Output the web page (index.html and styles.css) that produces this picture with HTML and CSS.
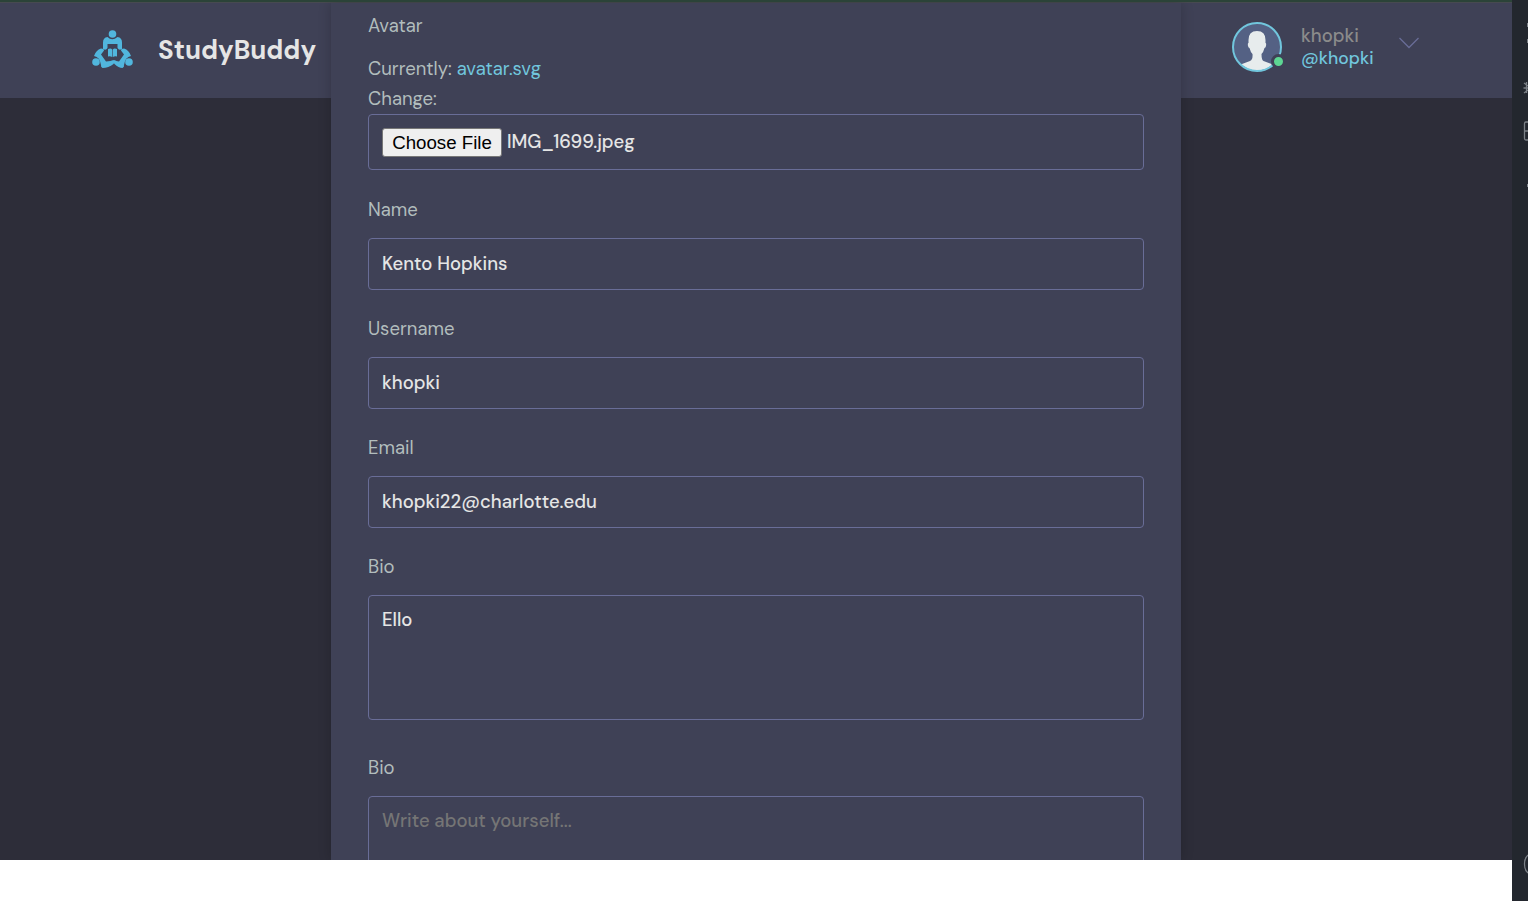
FILE: index.html
```
<!DOCTYPE html>
<html lang="en">
<head>
<meta charset="utf-8">
<title>StudyBuddy</title>
<link rel="stylesheet" href="styles.css">
</head>
<body>
<div class="window">
  <div class="page">
    <header class="header">
      <a class="brand">
        <svg class="logo" viewBox="0 0 42 42" fill="#51b6dd">
          <circle cx="20.5" cy="5" r="3.8"/>
          <path d="M11 20v-6.500q0-5 4.500-5.500 4.500 4.500 10 0 4.500.5 4.500 5.500V20q-3 2-4.500-1v-4h-10v4q-1.500 3-4.500 1z"/>
          <circle cx="4" cy="33" r="3.800"/>
          <circle cx="37" cy="33" r="3.800"/>
          <path d="M2 27q2-6 7-7.500 3 0 3 2l-3 4 5 7q5-.5 7.500-1.500 2 1 0 4-5 4-11 4-2-1-1.500-3-1-8-7-9z"/>
          <path d="M39 27q-2-6-7-7.500-3 0-3 2l3 4-5 7q-3-.5-4.500-1.500-2 1 0 4 4 4 8 4 2-1 1.500-3 1-8 7-9z"/>
          <path d="M16 20q3-1 4.200.5v7.500q-2-1-4.200-.5zM25 20q-3-1-4.200.5v7.500q2-1 4.200-.5z"/>
        </svg>
        <span class="brand-name">StudyBuddy</span>
      </a>
      <div class="user">
        <div class="avatar">
          <svg class="avatar-img" viewBox="0 0 50 50">
            <defs><clipPath id="round"><circle cx="25" cy="25" r="23.500"/></clipPath></defs>
            <circle cx="25" cy="25" r="24" fill="#546184"/>
            <path clip-path="url(#round)" fill="#e7eced" d="M16.500 18q0-9 8.500-9t8.500 9v3q1 0 .5 3-.5 2-1.500 2-1 4-3 6 0 6 2 7l8 3v8H10v-8l8-3q3-1 2.500-7-2-2-3-6-1 0-1.500-2-.5-3 .5-3z"/>
            <circle cx="25" cy="25" r="24" fill="none" stroke="#71c6dd" stroke-width="2"/>
          </svg>
          <i class="online"></i>
        </div>
        <div class="names"><span class="full-name">khopki</span><span class="handle">@khopki</span></div>
        <svg class="chevron" viewBox="0 0 20 12" fill="none" stroke="#696d97" stroke-width="1.300"><path d="M.5 1l9.500 9.500L19.500 1"/></svg>
      </div>
    </header>
    <form class="panel">
      <div class="field file-field">
        <label class="label"><span class="t-avatar">Avatar</span></label>
        <p class="line"><span class="t-currently">Currently:</span> <a class="link">avatar.svg</a></p>
        <p class="line"><span class="t-change">Change:</span></p>
        <div class="control file"><span class="choose">Choose File</span><span class="t-file">IMG_1699.jpeg</span></div>
      </div>
      <div class="field"><label class="label"><span class="t-name">Name</span></label><div class="control"><span class="t-kento">Kento Hopkins</span></div></div>
      <div class="field"><label class="label"><span class="t-username">Username</span></label><div class="control"><span class="t-khopki">khopki</span></div></div>
      <div class="field"><label class="label"><span class="t-email">Email</span></label><div class="control"><span class="t-address">khopki22@charlotte.edu</span></div></div>
      <div class="field bio"><label class="label"><span class="t-bio">Bio</span></label><div class="control area"><span class="t-ello">Ello</span></div></div>
      <div class="field"><label class="label"><span class="t-bio">Bio</span></label><div class="control area"><span class="placeholder">Write about yourself...</span></div></div>
    </form>
  </div>
  <aside class="side">
    <svg width="16" height="901" viewBox="0 0 16 901" fill="none" stroke="#7c8187" stroke-width="1.300">
      <path d="M15.500 23v4M15.500 39v4M15.500 184v3" stroke-width="1"/>
      <path d="M12 83l4 3M11.500 88H16M12 93l4-3M14.500 82v11"/>
      <path d="M16 122h-2q-1.500 0-1.500 1.500v15q0 1.500 1.500 1.500h2M12.500 131H16"/>
      <path d="M16 855q-3.500 3-3.500 9t3.500 9"/>
    </svg>
  </aside>
</div>
</body>
</html>
```
FILE: styles.css
```
* { box-sizing: border-box; }
body { margin: 0; background: #fff; color: #b2bdbd; font: 18.5px/24px "DM Sans", Inter, sans-serif; }
p { margin: 0; }
.window { display: flex; width: 1528px; height: 901px; overflow: hidden; }
.page { width: 1512px; height: 860px; overflow: hidden; background: #2d2d39; border-top: 2px solid #2b4338; }
.side { width: 16px; height: 901px; background: #23272e; }
.side svg { display: block; }
.header { display: flex; justify-content: space-between; height: 96px; padding: 20px 93px 0 92px; background: #3f4156; border-top: 1px solid #474a50; }
.brand { display: flex; gap: 24px; height: 54px; align-items: center; }
.logo { width: 42px; height: 42px; }
.brand-name { color: #e5e5e5; font-size: 26px; font-weight: 700; line-height: 32px; }
.user { display: flex; height: 50px; margin-top: -1px; }
.avatar { position: relative; width: 50px; height: 50px; }
.avatar-img { display: block; width: 50px; height: 50px; }
.online { position: absolute; right: -4px; bottom: 3px; width: 15px; height: 15px; border: 3px solid #3f4156; border-radius: 50%; background: #5dd693; }
.names { display: flex; flex-direction: column; width: 73px; margin: 3px 25px 0 19px; line-height: 22px; font-weight: 500; white-space: nowrap; }
.full-name { color: #8b8b8b; }
.handle { color: #71c6dd; font-size: 17.5px; }
.chevron { width: 20px; height: 12px; margin-top: 15px; }
.panel { position: relative; width: 850px; height: 857px; margin: -95px 0 0 331px; padding: 11px 37px 0; background: #3f4156; box-shadow: 0 0 12px rgba(0, 0, 0, .2); }
.field { margin-bottom: 28px; }
.bio { margin-bottom: 36px; }
.label { display: block; height: 24px; margin-bottom: 16px; }
.file-field .label { margin-bottom: 19px; }
.line { height: 24px; white-space: nowrap; }
.line + .line { margin: 6px 0 3px; }
.link { color: #71c6dd; }
.control { display: flex; align-items: center; height: 52px; padding: 0 13px; margin-bottom: -1px; border: 1px solid #696d97; border-radius: 4px; color: #e5e5e5; font-weight: 500; white-space: nowrap; }
.file { height: 56px; margin-bottom: 0; gap: 5px; }
.choose { width: 120px; height: 29px; border: 1px solid #777; border-radius: 3px; background: #efefef; color: #000; font: 18.7px/27px "Liberation Sans", sans-serif; text-align: center; }
.area { height: 125px; margin-bottom: 0; align-items: flex-start; padding-top: 12px; }
.placeholder { color: #757575; }
```
